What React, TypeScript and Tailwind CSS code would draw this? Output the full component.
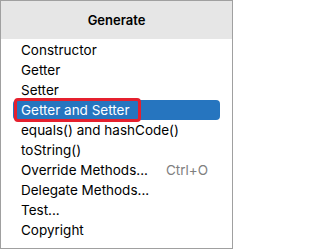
import React from 'react';

const items: { label: string; shortcut?: string }[] = [
  { label: 'Constructor' },
  { label: 'Getter' },
  { label: 'Setter' },
  { label: 'Getter and Setter' },
  { label: 'equals() and hashCode()' },
  { label: 'toString()' },
  { label: 'Override Methods...', shortcut: 'Ctrl+O' },
  { label: 'Delegate Methods...' },
  { label: 'Test...' },
  { label: 'Copyright' },
];

const selected = 3;

export default function App() {
  return (
    <div
      className="w-[233px] h-[249px] bg-white border border-[#a0a0a0] flex flex-col text-[13.5px] text-[#000000]"
      style={{ fontFamily: 'Inter, "Noto Sans", sans-serif' }}
    >
      {/* Header */}
      <div className="h-[38px] bg-[#e6e6e6] flex items-center justify-center font-semibold text-[13px] pt-[2px] shrink-0">
        Generate
      </div>

      {/* Items */}
      <div className="flex flex-col px-3 pt-[1px]">
        {items.map((item, i) => (
          <div
            key={item.label}
            className={
              i === selected
                ? 'relative h-5 flex items-center pl-2 pt-[1px] rounded-[4px] bg-[#2675bf] text-white'
                : 'relative h-5 flex items-center pl-2 pt-[1px]'
            }
          >
            <span className="w-[145px] shrink-0 whitespace-nowrap">{item.label}</span>
            {item.shortcut && <span className="text-[#808080]">{item.shortcut}</span>}
            {i === selected && (
              <div className="absolute left-[1px] top-[-2px] w-[127px] h-[24px] border-[3px] border-[#e5202e] rounded-[4px]" />
            )}
          </div>
        ))}
      </div>
    </div>
  );
}
